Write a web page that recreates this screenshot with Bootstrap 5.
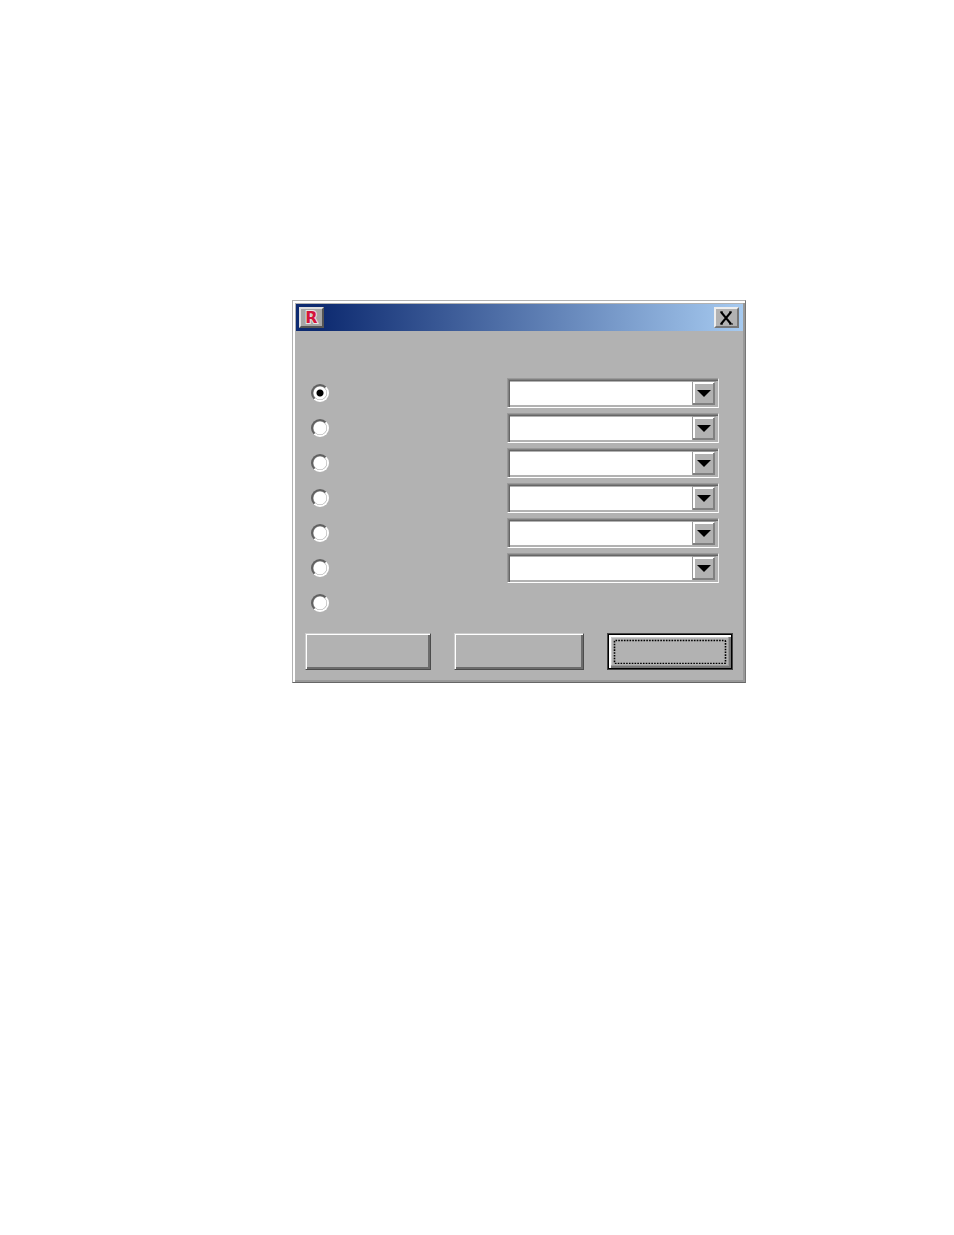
<!DOCTYPE html>
<html lang="en">
<head>
<meta charset="utf-8">
<meta name="viewport" content="width=device-width, initial-scale=1">
<title>Dialog</title>
<link href="https://cdn.jsdelivr.net/npm/bootstrap@5.3.0/dist/css/bootstrap.min.css" rel="stylesheet">
<style>
  body { font-family: "Liberation Sans", Arial, sans-serif; background: #fff; }
  .stage { padding: 300px 0 0 84px; }
  .dialog {
    max-width: 454px; background: #b2b2b2;
    border: 1px solid #b2b2b2; border-right-color: #777; border-bottom-color: #666;
    box-shadow: inset 2px 2px #fff, inset -2px -2px #999;
    padding: 3px 2px 2px 3px;
  }
  .titlebar { height: 27px; padding: 0 4px 0 3px; background: linear-gradient(90deg, #0d2a70 5%, #a6caf0); }
  .tool {
    width: 25px; height: 21px; background: #b2b2b2;
    border: 2px solid; border-color: #eee #777 #777 #eee;
  }
  .tool-menu {
    border-color: #ddd #555 #555 #ddd; background: #a6a6a6;
    font: bold 16px/17px "DejaVu Sans", sans-serif; color: #d4143c;
    -webkit-text-stroke: 2px #e4e4e4; paint-order: stroke;
  }
  .options { padding: 47px 24px 16px 15px; gap: 6px; }
  .choice { height: 29px; }
  .choice input {
    appearance: none; width: 18px; height: 18px; margin: 0; border-radius: 50%;
    border: 2px solid; border-color: #606060 #fff #fff #606060;
    background: radial-gradient(circle, #fff 6px, #999 7px);
  }
  .choice input:checked { background: radial-gradient(circle, #000 3px, #fff 4px, #fff 6px, #999 7px); }
  .combo {
    width: 212px; height: 30px;
    border: 1px solid; border-color: #999 #eee #fff #999;
    box-shadow: inset 1px 1px #808080, inset 2px 2px #666, inset -2px -1px #b2b2b2;
    padding: 3px 2px 2px;
  }
  .combo select { appearance: none; border: 0; border-radius: 0; background: #fff; outline: 0; }
  .combo svg { right: 2px; top: 2px; pointer-events: none; }
  .actions { padding: 0 10px 10px 9px; gap: 23px; }
  .push {
    height: 37px; background: #b2b2b2; flex: 1 1 126px;
    border: 1px solid; border-color: #ccc #4c4c4c #4c4c4c #ccc;
    box-shadow: inset 1px 1px #fff, inset -2px -2px #6c6c6c;
  }
  .push-wide { flex-basis: 130px; }
  .push-default {
    border-color: #444; padding: 5px;
    box-shadow: inset 0 0 0 1px #000, inset 3px 3px #fff, inset -3px -3px #777, inset -4px -4px #999, inset 4px 4px #ccc;
  }
</style>
</head>
<body>
<main class="stage">
  <form class="dialog mx-auto w-100" aria-label="Settings">
    <div class="titlebar d-flex align-items-center justify-content-between">
      <button type="button" class="tool tool-menu p-0 d-flex align-items-center justify-content-center" aria-label="Window menu">R</button>
      <button type="button" class="tool p-0 d-flex align-items-center justify-content-center" aria-label="Close">
        <svg width="14" height="14" viewBox="0 0 14 14" aria-hidden="true">
          <path d="M1 1L11 13M11 1L1 13" stroke="#000" stroke-width="2"/><path d="M0 1H3M9 1H12M0 13H3M9 13H13" stroke="#000"/>
        </svg>
      </button>
    </div>

    <div class="options d-flex flex-column">
      <div class="choice d-flex align-items-center justify-content-between">
        <input type="radio" name="choice" aria-label="Option 1" checked>
        <div class="combo position-relative"><select class="d-block w-100 h-100" aria-label="Value 1"><option></option></select>
          <svg class="position-absolute" width="24" height="24" aria-hidden="true"><use href="#arrow"/></svg></div>
      </div>
      <div class="choice d-flex align-items-center justify-content-between">
        <input type="radio" name="choice" aria-label="Option 2">
        <div class="combo position-relative"><select class="d-block w-100 h-100" aria-label="Value 2"><option></option></select>
          <svg class="position-absolute" width="24" height="24" aria-hidden="true"><use href="#arrow"/></svg></div>
      </div>
      <div class="choice d-flex align-items-center justify-content-between">
        <input type="radio" name="choice" aria-label="Option 3">
        <div class="combo position-relative"><select class="d-block w-100 h-100" aria-label="Value 3"><option></option></select>
          <svg class="position-absolute" width="24" height="24" aria-hidden="true"><use href="#arrow"/></svg></div>
      </div>
      <div class="choice d-flex align-items-center justify-content-between">
        <input type="radio" name="choice" aria-label="Option 4">
        <div class="combo position-relative"><select class="d-block w-100 h-100" aria-label="Value 4"><option></option></select>
          <svg class="position-absolute" width="24" height="24" aria-hidden="true"><use href="#arrow"/></svg></div>
      </div>
      <div class="choice d-flex align-items-center justify-content-between">
        <input type="radio" name="choice" aria-label="Option 5">
        <div class="combo position-relative"><select class="d-block w-100 h-100" aria-label="Value 5"><option></option></select>
          <svg class="position-absolute" width="24" height="24" aria-hidden="true"><use href="#arrow"/></svg></div>
      </div>
      <div class="choice d-flex align-items-center justify-content-between">
        <input type="radio" name="choice" aria-label="Option 6">
        <div class="combo position-relative"><select class="d-block w-100 h-100" aria-label="Value 6"><option></option></select>
          <svg class="position-absolute" width="24" height="24" aria-hidden="true"><use href="#arrow"/></svg></div>
      </div>
      <div class="choice d-flex align-items-center">
        <input type="radio" name="choice" aria-label="Option 7">
      </div>
    </div>

    <div class="actions d-flex">
      <button type="button" class="push" aria-label="Action 1"></button>
      <button type="button" class="push push-wide" aria-label="Action 2"></button>
      <button type="button" class="push push-default" aria-label="Action 3">
        <svg class="d-block w-100 h-100" aria-hidden="true"><rect x="1.500" y="1.500" width="111" height="23" rx="1" fill="none" stroke="#000" stroke-width="1.600" stroke-dasharray="1.600 1.200"/></svg>
      </button>
    </div>
  </form>
</main>

<svg width="0" height="0" class="position-absolute" aria-hidden="true">
  <symbol id="arrow" viewBox="0 0 24 24">
    <path d="M0 0H24V24H0Z" fill="#b2b2b2"/>
    <path d="M0.500 24V0.500H24" fill="none" stroke="#999"/>
    <path d="M2 22V2H22" fill="none" stroke="#fff" stroke-width="2"/>
    <path d="M1 23H22V2" fill="none" stroke="#808080" stroke-width="2"/>
    <path d="M5 9H19L12 16Z" fill="#000"/>
  </symbol>
</svg>
<script src="https://cdn.jsdelivr.net/npm/bootstrap@5.3.0/dist/js/bootstrap.bundle.min.js"></script>
</body>
</html>
